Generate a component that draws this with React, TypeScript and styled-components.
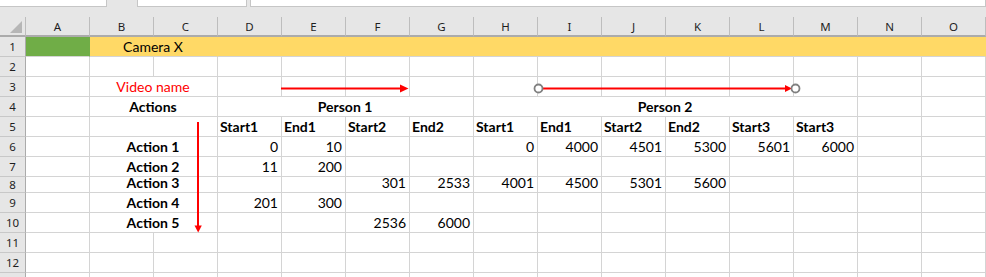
import React from 'react';
import styled, { createGlobalStyle } from 'styled-components';

const GRID = '#d4d4d4';
const HEAD_BG = '#e6e6e6';
const HEAD_LINE = '#bdbdbd';
const HEAD_EDGE = '#ababab';
const GREEN = '#70ad47';
const YELLOW = '#ffd966';
const RED = '#ff0000';

const GlobalStyle = createGlobalStyle`
  html, body { margin: 0; padding: 0; background: #ffffff; }
  body { font-family: Lato, "Liberation Sans", sans-serif; }
`;

const Window = styled.div`
  position: relative;
  width: 986px;
  height: 277px;
  overflow: hidden;
  background: #ffffff;
`;

/* strip with the name box and formula bar edges */
const TopStrip = styled.div`
  display: flex;
  align-items: flex-start;
  height: 17px;
  background: ${HEAD_BG};
`;

const BarBox = styled.div<{ $width?: number; $gap?: number; $left?: boolean }>`
  box-sizing: border-box;
  height: 7px;
  background: #ffffff;
  margin-left: ${p => p.$gap ?? 0}px;
  ${p => (p.$width ? `width: ${p.$width}px;` : 'flex: 1;')}
  border-bottom: 1px solid #c6c6c6;
  border-right: 1px solid #c6c6c6;
  ${p => (p.$left ? 'border-left: 1px solid #c6c6c6;' : '')}
`;

const Sheet = styled.div`
  display: grid;
  grid-template-columns: 26px repeat(15, 64px);
  grid-template-rows: repeat(8, 20px) 16px repeat(5, 20px);
`;

const Corner = styled.div`
  box-sizing: border-box;
  background: ${HEAD_BG};
  border-right: 1px solid ${HEAD_LINE};
  border-bottom: 2px solid ${HEAD_EDGE};
  display: flex;
  align-items: flex-end;
  justify-content: flex-end;
  padding: 0 3px 2px 0;
`;

const ColHead = styled.div`
  box-sizing: border-box;
  background: ${HEAD_BG};
  border-right: 1px solid ${HEAD_LINE};
  border-bottom: 2px solid ${HEAD_EDGE};
  display: flex;
  align-items: center;
  justify-content: center;
  font-family: "Noto Sans", "Open Sans", sans-serif;
  font-size: 11.5px;
  color: #1e1e1e;
`;

const RowHead = styled.div`
  box-sizing: border-box;
  background: ${HEAD_BG};
  border-right: 1px solid ${HEAD_EDGE};
  border-bottom: 1px solid #c8c8c8;
  display: flex;
  align-items: center;
  justify-content: center;
  font-family: "Noto Sans", "Open Sans", sans-serif;
  font-size: 11.5px;
  color: #1e1e1e;
`;

type Align = 'left' | 'center' | 'right';

const Cell = styled.div<{
  $span: number;
  $align: Align;
  $bold?: boolean;
  $fill?: string;
  $color?: string;
}>`
  box-sizing: border-box;
  grid-column: span ${p => p.$span};
  display: flex;
  align-items: flex-end;
  justify-content: ${p =>
    p.$align === 'center' ? 'center' : p.$align === 'right' ? 'flex-end' : 'flex-start'};
  padding: 0 3px 1px 2px;
  background: ${p => p.$fill ?? '#ffffff'};
  border-right: 1px solid ${p => p.$fill ?? GRID};
  border-bottom: 1px solid ${GRID};
  font-size: 14px;
  line-height: 17px;
  font-weight: ${p => (p.$bold ? 700 : 400)};
  color: ${p => p.$color ?? '#000000'};
  white-space: nowrap;
`;

const Overlay = styled.svg`
  position: absolute;
  left: 0;
  top: 0;
  pointer-events: none;
`;

type CellSpec = {
  span?: number;
  text?: string;
  align?: Align;
  bold?: boolean;
  fill?: string;
  color?: string;
};

const COLUMNS = 'ABCDEFGHIJKLMNO'.split('');

const blanks = (n: number): CellSpec[] => Array.from({ length: n }, () => ({}));

const values = (list: string[]): CellSpec[] =>
  list.map(v => (v === '' ? {} : { text: v, align: 'right' as Align }));

const label = (text: string, extra: Partial<CellSpec> = {}): CellSpec => ({
  span: 2,
  text,
  align: 'center',
  bold: true,
  ...extra,
});

const headings = ['Start1', 'End1', 'Start2', 'End2', 'Start1', 'End1', 'Start2', 'End2', 'Start3', 'Start3'];

// the last row only peeks in at the bottom edge, so its number is left off
const ROWS: { n: number; shown?: boolean; cells: CellSpec[] }[] = [
  {
    n: 1,
    cells: [
      { fill: GREEN },
      { span: 2, text: 'Camera X', align: 'center', fill: YELLOW },
      { span: 12, fill: YELLOW },
    ],
  },
  { n: 2, cells: blanks(15) },
  {
    n: 3,
    cells: [{}, label('Video name', { bold: false, color: RED }), ...blanks(12)],
  },
  {
    n: 4,
    cells: [
      {},
      label('Actions'),
      { span: 4, text: 'Person 1', align: 'center', bold: true },
      { span: 6, text: 'Person 2', align: 'center', bold: true },
      {},
      {},
    ],
  },
  {
    n: 5,
    cells: [{}, { span: 2 }, ...headings.map(h => ({ text: h, bold: true })), {}, {}],
  },
  {
    n: 6,
    cells: [{}, label('Action 1'), ...values(['0', '10', '', '', '0', '4000', '4501', '5300', '5601', '6000', '', ''])],
  },
  {
    n: 7,
    cells: [{}, label('Action 2'), ...values(['11', '200', '', '', '', '', '', '', '', '', '', ''])],
  },
  {
    n: 8,
    cells: [{}, label('Action 3'), ...values(['', '', '301', '2533', '4001', '4500', '5301', '5600', '', '', '', ''])],
  },
  {
    n: 9,
    cells: [{}, label('Action 4'), ...values(['201', '300', '', '', '', '', '', '', '', '', '', ''])],
  },
  {
    n: 10,
    cells: [{}, label('Action 5'), ...values(['', '', '2536', '6000', '', '', '', '', '', '', '', ''])],
  },
  { n: 11, cells: blanks(15) },
  { n: 12, cells: blanks(15) },
  { n: 13, shown: false, cells: blanks(15) },
];

const SelectAllMark = () => (
  <svg width="12" height="12" viewBox="0 0 12 12">
    <polygon points="12,0 12,12 0,12" fill="#b6b6b6" />
  </svg>
);

const Arrows = () => (
  <Overlay width={986} height={277} viewBox="0 0 986 277">
    {/* video name -> person 1 */}
    <line x1={281} y1={88.5} x2={402} y2={88.5} stroke={RED} strokeWidth={2} />
    <polygon points="400,84.5 408.5,88.5 400,92.5" fill={RED} />

    {/* person 2 span connector */}
    <line x1={542} y1={88.5} x2={788} y2={88.5} stroke={RED} strokeWidth={2} />
    <polygon points="785,85 792,88.5 785,92" fill={RED} />
    <circle cx={538.5} cy={88.5} r={4} fill="#ffffff" stroke="#808080" strokeWidth={1.8} />
    <circle cx={795.5} cy={88.5} r={4} fill="#ffffff" stroke="#808080" strokeWidth={1.8} />

    {/* actions downward */}
    <line x1={198} y1={122} x2={198} y2={227} stroke={RED} strokeWidth={2} />
    <polygon points="194.5,225.5 201.8,225.5 198.2,232.5" fill={RED} />
  </Overlay>
);

export default function App() {
  return (
    <>
      <GlobalStyle />
      <Window>
        <TopStrip>
          <BarBox $width={107} />
          <BarBox $width={110} $gap={30} $left />
          <BarBox $gap={3} $left />
        </TopStrip>
        <Sheet>
          <Corner>
            <SelectAllMark />
          </Corner>
          {COLUMNS.map(c => (
            <ColHead key={c}>{c}</ColHead>
          ))}
          {ROWS.map(row => (
            <React.Fragment key={row.n}>
              <RowHead>{row.shown === false ? null : row.n}</RowHead>
              {row.cells.map((cell, i) => (
                <Cell
                  key={i}
                  $span={cell.span ?? 1}
                  $align={cell.align ?? 'left'}
                  $bold={cell.bold}
                  $fill={cell.fill}
                  $color={cell.color}
                >
                  {cell.text}
                </Cell>
              ))}
            </React.Fragment>
          ))}
        </Sheet>
        <Arrows />
      </Window>
    </>
  );
}
